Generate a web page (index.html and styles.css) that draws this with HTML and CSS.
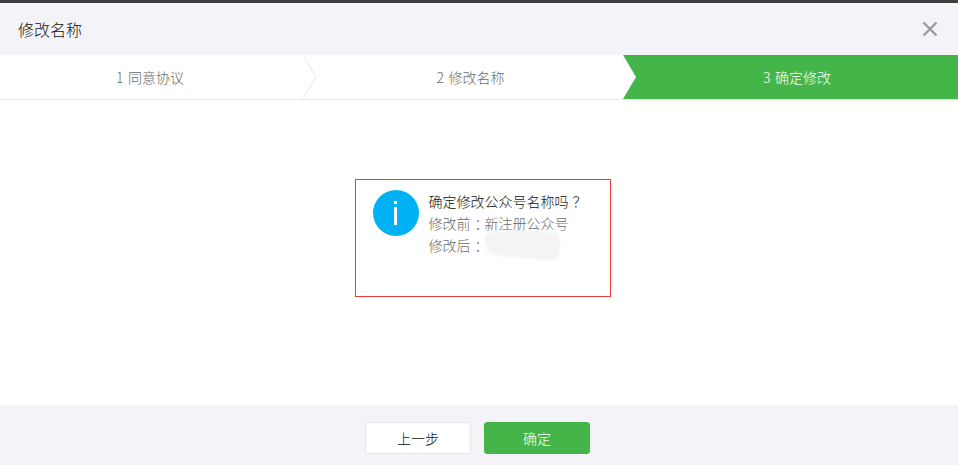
FILE: index.html
```html
<!DOCTYPE html>
<html lang="zh-CN">
<head>
    <meta charset="UTF-8">
    <meta name="viewport" content="width=device-width, initial-scale=1.0">
    <title>修改名称</title>
    <link rel="stylesheet" href="styles.css">
</head>
<body>
    <div class="dialog">
        <div class="dialog-header">
            <h3 class="dialog-title">修改名称</h3>
            <svg class="close-icon" width="16" height="16" viewBox="0 0 16 16">
                <path d="M1.5 1.5 L14.5 14.5 M14.5 1.5 L1.5 14.5" stroke="#9b9b9b" stroke-width="2.4" fill="none"/>
            </svg>
        </div>

        <div class="steps">
            <div class="step step-first">
                1 同意协议
                <svg class="step-arrow" width="13" height="44" viewBox="0 0 13 44">
                    <path d="M0 0 L13 22 L0 44 Z" fill="#fff"/>
                    <path d="M0 0 L13 22 L0 44" fill="none" stroke="#e7e7eb"/>
                </svg>
            </div>
            <div class="step step-middle">
                2 修改名称
                <svg class="step-arrow" width="13" height="44" viewBox="0 0 13 44">
                    <path d="M0 0 L13 22 L0 44 Z" fill="#fff"/>
                </svg>
            </div>
            <div class="step step-current">3 确定修改</div>
        </div>

        <div class="dialog-body">
            <div class="confirm-box">
                <div class="info-icon"><span class="info-bar"></span></div>
                <div class="confirm-text">
                    <p class="confirm-title">确定修改公众号名称吗<span class="punct">？</span></p>
                    <p class="confirm-desc">修改前<span class="punct">：</span>新注册公众号</p>
                    <p class="confirm-desc">修改后<span class="punct">：</span></p>
                </div>
                <svg class="smudge" width="80" height="32" viewBox="0 0 80 32">
                    <path d="M4 3 C20 -1 50 0 70 2 C78 3 79 8 78 14 C78 22 78 28 72 30 C60 32 45 27 30 27 C18 27 8 26 5 20 C2 14 1 6 4 3 Z" fill="#f4f4f4"/>
                </svg>
            </div>
        </div>

        <div class="dialog-footer">
            <button class="btn btn-default">上一步</button>
            <button class="btn btn-primary">确定</button>
        </div>
    </div>
</body>
</html>
```

FILE: styles.css
```css
* {
    box-sizing: border-box;
}

html, body {
    margin: 0;
    padding: 0;
    height: 100%;
    overflow: hidden;
}

body {
    font-family: "Noto Sans CJK SC", "Liberation Sans", sans-serif;
    font-size: 14px;
    font-weight: 300;
    color: #111;
    background: #fff;
}

.dialog {
    display: flex;
    flex-direction: column;
    height: 465px;
    border-top: 3px solid #3e3e3e;
}

.dialog-header {
    display: flex;
    align-items: center;
    justify-content: space-between;
    height: 52px;
    padding: 0 20px 0 18px;
    background: #f3f3f8;
}

.dialog-title {
    margin: 0;
    font-size: 16px;
    font-weight: 300;
    color: #111;
}

.steps {
    display: flex;
    height: 45px;
    border-bottom: 1px solid #e7e7eb;
}

.step {
    position: relative;
    height: 44px;
    line-height: 44px;
    text-align: center;
    word-spacing: 1.5px;
    color: #6b6b6b;
    background: #fff;
}

.step-first {
    width: 303px;
    padding-right: 3px;
    z-index: 2;
}

.step-middle {
    width: 320px;
    padding-left: 15px;
    z-index: 1;
}

.step-current {
    flex: 1;
    padding-left: 13px;
    color: #fff;
    background: #44b549;
}

.step-arrow {
    position: absolute;
    top: 0;
    left: 100%;
}

.dialog-body {
    flex: 1;
    display: flex;
    justify-content: center;
    padding: 79px 0 0 7px;
}

.confirm-box {
    position: relative;
    display: flex;
    align-items: flex-start;
    gap: 10px;
    width: 256px;
    height: 118px;
    padding: 10px 17px;
    border: 1px solid #f03a3a;
}

.info-icon {
    display: flex;
    align-items: center;
    justify-content: center;
    flex: none;
    width: 46px;
    height: 46px;
    border-radius: 50%;
    background: #00b2f3;
}

.info-bar {
    position: relative;
    display: block;
    width: 3px;
    height: 18px;
    margin-top: 5px;
    background: #fff;
}

.info-bar::before {
    content: "";
    position: absolute;
    top: -6px;
    left: 0;
    width: 3px;
    height: 3px;
    background: #fff;
}

.confirm-text {
    line-height: 22px;
    white-space: nowrap;
}

.confirm-text p {
    margin: 0;
}

.confirm-title {
    color: #111;
}

.confirm-desc {
    color: #6b6b6b;
}

.punct {
    padding-left: 4px;
    letter-spacing: -4px;
}

.smudge {
    position: absolute;
    top: 50px;
    left: 126px;
    filter: blur(1px);
}

.dialog-footer {
    display: flex;
    justify-content: center;
    gap: 13px;
    height: 60px;
    padding: 17px 3px 0 0;
    background: #f3f3f8;
}

.btn {
    width: 106px;
    height: 32px;
    border-radius: 3px;
    font-family: inherit;
    font-size: 14px;
    font-weight: 300;
    cursor: pointer;
}

.btn-default {
    color: #111;
    background: #fff;
    border: 1px solid #e4e8eb;
}

.btn-primary {
    color: #fff;
    background: #44b549;
    border: 1px solid #44b549;
}
```
